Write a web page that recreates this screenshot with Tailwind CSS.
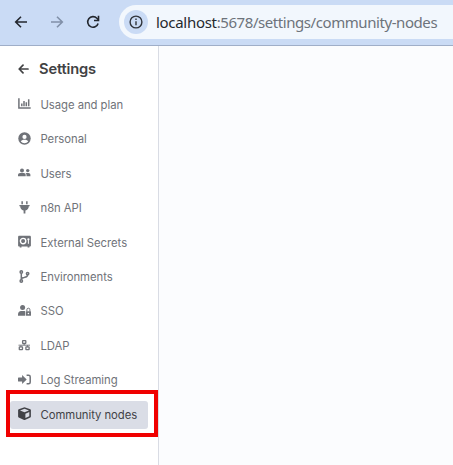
<!DOCTYPE html>
<html lang="en">
<head>
<meta charset="utf-8">
<title>Settings</title>
<script src="https://cdn.jsdelivr.net/npm/@tailwindcss/browser@4"></script>
</head>
<body class="w-[453px] h-[465px] overflow-hidden flex flex-col bg-white font-['Inter',sans-serif]">
<header class="h-[46px] shrink-0 flex items-start pt-[5px] bg-[#cadbf5] border-b border-[#9faec8]">
  <div class="flex items-center h-[34px] w-[119px] shrink-0 pl-[14px] gap-[22px] text-[#23272e]">
    <svg class="size-[14px] shrink-0" viewBox="0 0 14 14" fill="none" stroke="currentColor" stroke-width="1.6"><path d="M13 7H2M7 1.7 1.7 7 7 12.3"/></svg>
    <svg class="size-[14px] shrink-0 text-[#8190a8]" viewBox="0 0 14 14" fill="none" stroke="currentColor" stroke-width="1.6"><path d="M1 7h11M7 1.7 12.3 7 7 12.3"/></svg>
    <svg class="size-[14px] shrink-0" viewBox="0 0 14 14" fill="none" stroke="currentColor" stroke-width="1.6"><path d="M12.1 8.4A5.3 5.3 0 1 1 10.9 3.3L12.6 5"/><path d="M12.5.8v4.7H8"/></svg>
  </div>
  <div class="flex-1 h-[34px] rounded-l-full bg-[#f2f7fd] flex items-center pl-[5px]">
    <div class="size-6 shrink-0 rounded-full bg-[#cadbf5] flex items-center justify-center">
      <svg class="size-[14px] text-[#30343b]" viewBox="0 0 14 14" fill="none" stroke="currentColor" stroke-width="1.4"><circle cx="7" cy="7" r="5.9"/><path d="M7 6.2v4M7 3.6v1.5"/></svg>
    </div>
    <div class="ml-[8px] whitespace-nowrap font-['Noto_Sans',sans-serif] text-[15px] leading-[34px] tracking-[-0.43px] text-[#6d737b]"><span class="text-[#25292e] tracking-[-0.3px]">localhost</span>:5678/settings/community-nodes</div>
  </div>
</header>
<div class="flex flex-1 min-h-0">
  <aside class="w-[159px] shrink-0 border-r border-[#d9dce4] bg-white text-[#707379]">
    <div class="flex items-center h-[41.8px] pt-[4px] pl-[18px] gap-[10px] text-[#414244]">
      <svg class="w-[11px] h-[10px]" viewBox="0 0 11 10" fill="none" stroke="currentColor" stroke-width="1.7" stroke-linecap="round" stroke-linejoin="round"><path d="M10 5H1.3M5 1.2 1.2 5 5 8.8"/></svg>
      <h1 class="text-[14.7px] leading-5 font-semibold tracking-[-0.15px] pt-px">Settings</h1>
    </div>
    <nav class="text-[11.3px] leading-4 tracking-[-0.04px]">
      <div class="h-[34.4px] flex items-center pl-[18px] gap-[9.5px]"><svg class="size-[13px] -mt-[2px]" viewBox="0 0 13 13" fill="none" stroke="currentColor" stroke-width="1.5"><path d="M.9 1.2v9.9h11.8M3.8 9.3V6.4M6 9.3V4M8.3 9.3V5.2M10.7 9.3V2.2"/></svg><span class="pt-px">Usage and plan</span></div>
      <div class="h-[34.4px] flex items-center pl-[18px] gap-[9.5px]"><svg class="size-[13px] -mt-px" viewBox="0 0 13 13"><circle cx="6.5" cy="6.5" r="6.2" fill="currentColor"/><circle cx="6.5" cy="4.9" r="2.1" fill="#fff"/><path d="M2.8 9.6c.6-1.5 1.6-1.9 3.7-1.9s3.1.4 3.7 1.9a4.8 4.8 0 0 1-7.4 0z" fill="#fff"/></svg><span>Personal</span></div>
      <div class="h-[34.4px] flex items-center pl-[18px] gap-[9.5px]"><svg class="size-[13px] -mt-[2px]" viewBox="0 0 13 13" fill="currentColor"><circle cx="4" cy="4.4" r="2"/><circle cx="9.7" cy="4.6" r="1.7"/><path d="M0 10.3V9.2C0 7.8 1 7.1 2.2 7.1h3.5c1.3 0 2 .8 2 2.1v1.1zM8.5 10.3c.2-1.5-.2-2.5-.9-3.2h2.8c1.2 0 2 .7 2 1.8v1.4z"/></svg><span class="pt-px">Users</span></div>
      <div class="h-[34.4px] flex items-center pl-[18px] gap-[9.5px]"><svg class="size-[13px] -mt-px" viewBox="0 0 13 13" fill="currentColor"><path d="M3.4.3h1.5v3H3.4zM8.1.3h1.5v3H8.1zM1.4 4h10.2v1.3h-.8c0 2.4-1.3 3.8-3.4 4.2v3H5.6v-3C3.5 9.1 2.2 7.7 2.2 5.3h-.8z"/></svg><span>n8n API</span></div>
      <div class="h-[34.4px] flex items-center pl-[18px] gap-[9.5px]"><svg class="size-[13px] -mt-[2px]" viewBox="0 0 13 13"><path d="M1.3.7h10.4c.7 0 1.2.5 1.2 1.2v8.5c0 .7-.5 1.2-1.2 1.2h-.3v1H9.6v-1H3.5v1H1.7v-1h-.4C.6 11.6.1 11.1.1 10.4V1.9C.1 1.2.6.7 1.3.7z" fill="currentColor"/><circle cx="5.1" cy="6.1" r="2.7" fill="none" stroke="#fff" stroke-width="1.4"/><circle cx="10.4" cy="4.3" r="1.1" fill="#fff"/><path d="M10.4 4.3v4.5" stroke="#fff" stroke-width="1"/></svg><span class="pt-px">External Secrets</span></div>
      <div class="h-[34.4px] flex items-center pl-[18px] gap-[9.5px]"><svg class="size-[13px] -mt-px" viewBox="0 0 13 13" fill="none" stroke="currentColor" stroke-width="1.5"><circle cx="3.3" cy="2" r="1.2"/><circle cx="3.3" cy="11" r="1.2"/><circle cx="9.6" cy="3.6" r="1.2"/><path d="M3.3 3.2v6.6M9.6 4.8c0 2.2-1.3 2.3-3.3 2.6-1.9.2-3 .6-3 2.4"/></svg><span class="pt-px">Environments</span></div>
      <div class="h-[34.4px] flex items-center pl-[18px] gap-[9.5px]"><svg class="size-[13px] -mt-px" viewBox="0 0 13 13" fill="currentColor"><circle cx="4.6" cy="3.6" r="2.5"/><path d="M0 11.8v-1.4C0 8.5 1.3 7.1 3.1 7.1h3c.5 0 .9.1 1.2.3v4.4z"/><path d="M8 7.2h4.6c.2 0 .4.2.4.4v3.8c0 .2-.2.4-.4.4H8z"/><path d="M8.9 7.3V5.7a1.5 1.5 0 0 1 3 0v1.6" fill="none" stroke="currentColor" stroke-width="1"/><circle cx="10.4" cy="9.5" r=".8" fill="#fff"/></svg><span>SSO</span></div>
      <div class="h-[34.4px] flex items-center pl-[18px] gap-[9.5px]"><svg class="size-[13px] -mt-px" viewBox="0 0 13 13" fill="none" stroke="currentColor" stroke-width="1.3"><rect x="4.6" y="1.7" width="3.2" height="2.8" rx=".4"/><rect x="1.3" y="7.9" width="3.2" height="2.8" rx=".4"/><rect x="7.9" y="7.9" width="3.2" height="2.8" rx=".4"/><path d="M.5 6.2H12M6.2 4.3v2M2.9 6.2v2M9.5 6.2v2" stroke-width=".9"/></svg><span class="pt-px">LDAP</span></div>
      <div class="h-[34.4px] flex items-center pl-[18px] gap-[9.5px]"><svg class="size-[13px] -mt-px" viewBox="0 0 13 13"><path d="M0 5c0-.3.2-.6.6-.6h3.5V2.1L8.7 6.5 4.1 10.9V8.6H.6C.2 8.6 0 8.3 0 8z" fill="currentColor"/><path d="M8.6 2.2h2c1 0 1.6.6 1.6 1.5v5.6c0 .9-.6 1.5-1.6 1.5h-2" fill="none" stroke="currentColor" stroke-width="1.5"/></svg><span>Log Streaming</span></div>
      <div class="relative h-[34.4px] flex items-center">
        <div class="ml-[10px] w-[138px] h-[28px] rounded-[3px] bg-[#dadde6] flex items-center pl-[8px] gap-[9.5px] text-[#414247]"><svg class="size-[13px] -mt-[3px]" viewBox="0 0 13 13"><path d="M6.5.2 12.3 2.3c.4.2.6.5.6.9v6.3c0 .4-.2.7-.6.9L6.9 12.9h-.8L.7 10.4c-.4-.2-.6-.5-.6-.9V3.2c0-.4.2-.7.6-.9z" fill="currentColor"/><path d="M6.5 1.8 11 3.4 6.5 5.3 2 3.4zM7.4 6.8l3.9-1.7v4.1L7.4 11.1z" fill="#dadde6"/></svg><span class="pt-px">Community nodes</span></div>
        <div class="absolute left-[6px] -top-[7.6px] w-[152px] h-[47px] border-4 border-[#f00000]"></div>
      </div>
    </nav>
  </aside>
  <main class="flex-1 bg-[#fbfcfe]"></main>
</div>
</body>
</html>
